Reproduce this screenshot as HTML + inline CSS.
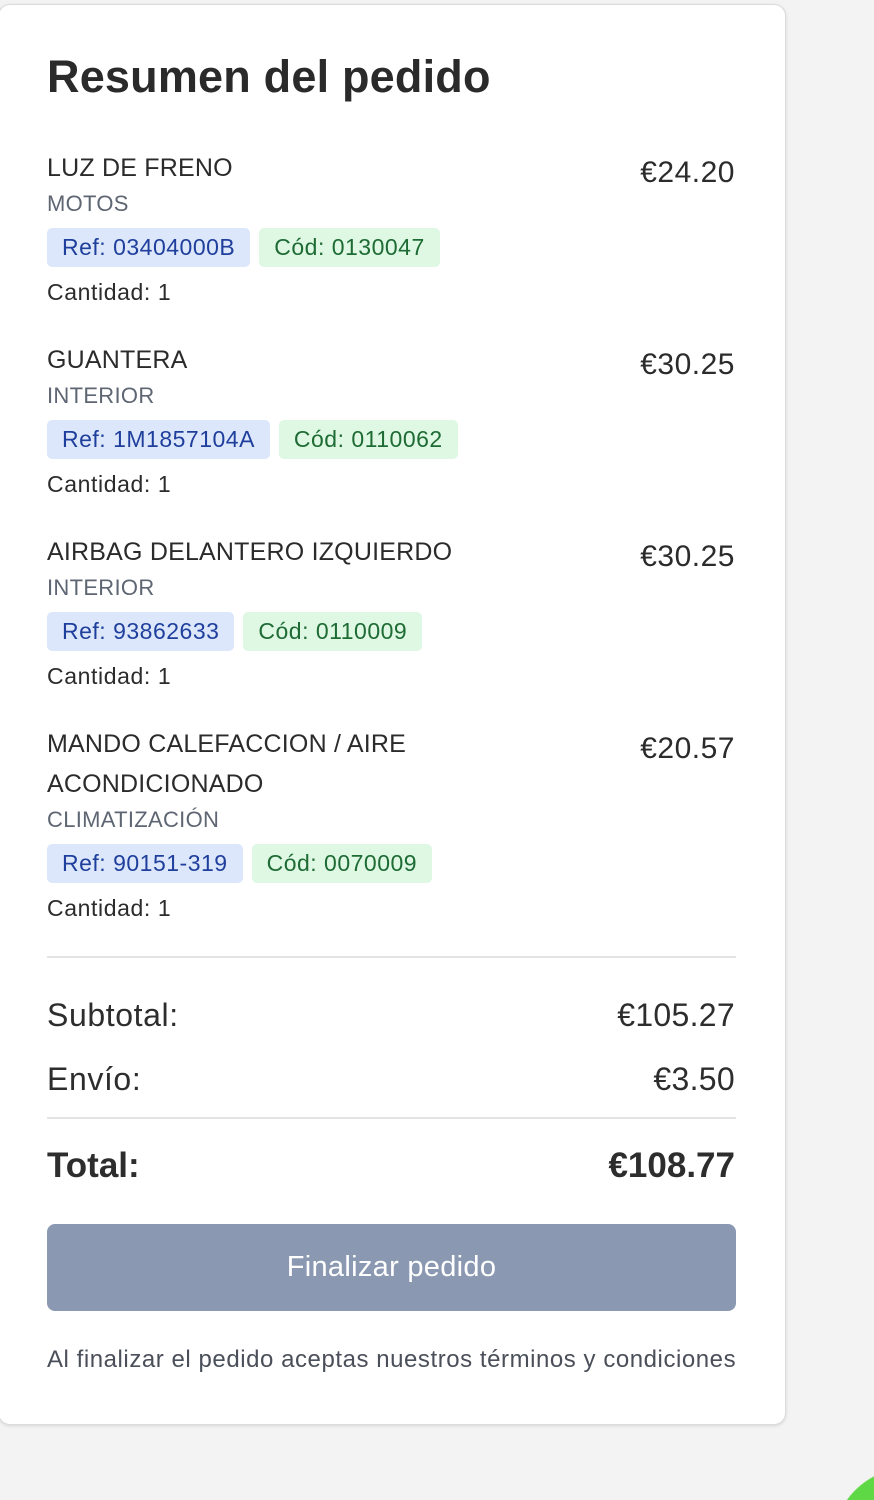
<!DOCTYPE html>
<html style="overflow:hidden;width:874px;height:1500px"><head><meta charset="utf-8"><style>
body{margin:0;width:874px;height:1500px;background:#f3f3f3;font-family:"Liberation Sans",sans-serif;position:relative;overflow:hidden;color:#2d2d2d}
.card{position:absolute;left:-2px;top:4px;width:786px;height:1419px;background:#fff;border:1px solid #dcdcdc;border-radius:12px;box-shadow:0 1px 3px rgba(0,0,0,.12)}
.a{position:absolute;white-space:nowrap;line-height:1}
.name{left:47px;font-size:25px;color:#2b2b2b;letter-spacing:0.2px}
.cat{left:47px;font-size:22px;color:#5f6673;letter-spacing:0.3px}
.price{right:139px;font-size:30px;color:#2b2b2b;letter-spacing:0.5px}
.qty{left:47px;font-size:23px;color:#2b2b2b;letter-spacing:0.6px}
.badges{position:absolute;left:47px;display:flex;gap:9px}
.b{height:39px;line-height:39px;padding:0 15px;border-radius:5px;font-size:23px;letter-spacing:0.5px}
.r{background:#dde7fb;color:#1f3f9c}
.c{background:#def8e4;color:#1f6b34}
.hr{position:absolute;left:47px;width:689px;height:2px;background:#e3e3e3}
</style></head><body>
<div class="card"></div>
<div class="a" style="left:47px;top:54px;font-size:45px;font-weight:bold;color:#2a2a2a;letter-spacing:0.2px">Resumen del pedido</div>

<div class="a name" style="top:156px">LUZ DE FRENO</div>
<div class="a price" style="top:158px">€24.20</div>
<div class="a cat" style="top:193px">MOTOS</div>
<div class="badges" style="top:228px"><span class="b r">Ref: 03404000B</span><span class="b c">Cód: 0130047</span></div>
<div class="a qty" style="top:281px">Cantidad: 1</div>

<div class="a name" style="top:348px">GUANTERA</div>
<div class="a price" style="top:350px">€30.25</div>
<div class="a cat" style="top:385px">INTERIOR</div>
<div class="badges" style="top:420px"><span class="b r">Ref: 1M1857104A</span><span class="b c">Cód: 0110062</span></div>
<div class="a qty" style="top:473px">Cantidad: 1</div>

<div class="a name" style="top:540px">AIRBAG DELANTERO IZQUIERDO</div>
<div class="a price" style="top:542px">€30.25</div>
<div class="a cat" style="top:577px">INTERIOR</div>
<div class="badges" style="top:612px"><span class="b r">Ref: 93862633</span><span class="b c">Cód: 0110009</span></div>
<div class="a qty" style="top:665px">Cantidad: 1</div>

<div class="a name" style="top:732px">MANDO CALEFACCION / AIRE</div>
<div class="a name" style="top:772px">ACONDICIONADO</div>
<div class="a price" style="top:734px">€20.57</div>
<div class="a cat" style="top:809px">CLIMATIZACIÓN</div>
<div class="badges" style="top:844px"><span class="b r">Ref: 90151-319</span><span class="b c">Cód: 0070009</span></div>
<div class="a qty" style="top:897px">Cantidad: 1</div>

<div class="hr" style="top:956px"></div>
<div class="a" style="left:47px;top:999px;font-size:32px;letter-spacing:0.6px">Subtotal:</div>
<div class="a" style="right:139px;top:999px;font-size:32px;letter-spacing:0.3px">€105.27</div>
<div class="a" style="left:47px;top:1063px;font-size:32px;letter-spacing:0.6px">Envío:</div>
<div class="a" style="right:139px;top:1063px;font-size:32px;letter-spacing:0.3px">€3.50</div>
<div class="hr" style="top:1117px"></div>
<div class="a" style="left:47px;top:1148px;font-size:35px;font-weight:bold">Total:</div>
<div class="a" style="right:139px;top:1148px;font-size:35px;font-weight:bold">€108.77</div>

<div style="position:absolute;left:47px;top:1224px;width:689px;height:87px;background:#8a99b1;border-radius:8px;color:#fff;font-size:29px;text-align:center;line-height:87px;letter-spacing:0.3px">Finalizar pedido</div>
<div class="a" style="left:47px;top:1348px;font-size:24px;color:#4a4f59;letter-spacing:0.55px">Al finalizar el pedido aceptas nuestros términos y condiciones</div>

<div style="position:absolute;left:845px;top:1475px;width:29px;height:25px;background:radial-gradient(circle at 65px 70px,#5fd845 77px,rgba(95,216,69,0) 78px)"></div>
</body></html>
